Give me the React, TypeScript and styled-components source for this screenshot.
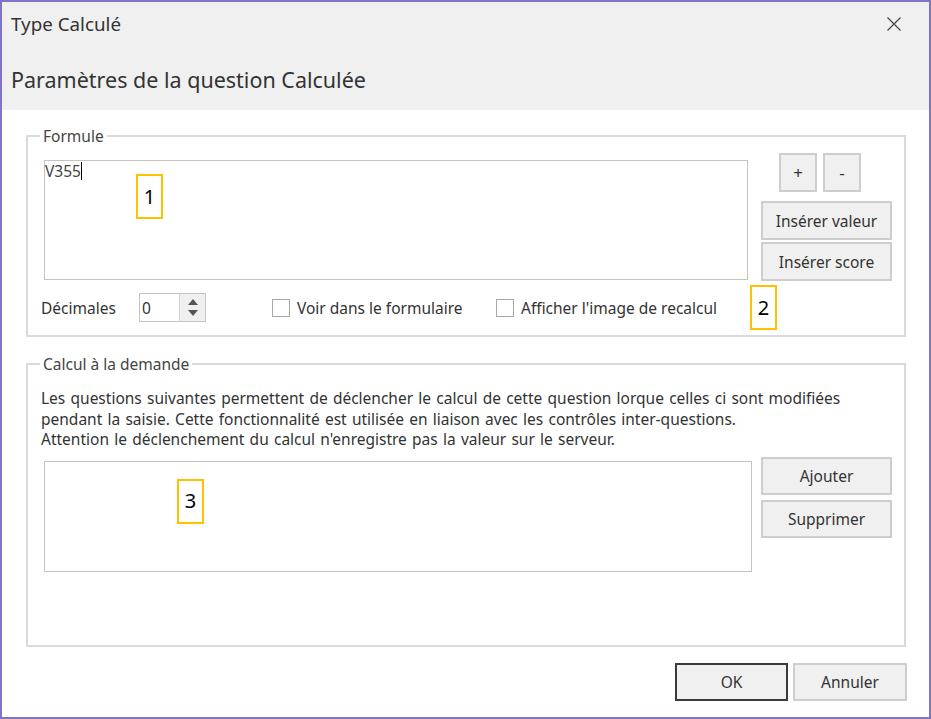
import React from "react";
import styled, { createGlobalStyle } from "styled-components";

const Global = createGlobalStyle`
  html, body { margin: 0; padding: 0; background: #fff; }
  body { font-family: "Noto Sans", "Open Sans", sans-serif; }
  * { box-sizing: border-box; }
`;

const FS = 15.5;

const Window = styled.div`
  width: 931px;
  height: 719px;
  border: 2px solid #8174c4;
  background: #fff;
  display: flex;
  flex-direction: column;
  font-family: "Noto Sans", sans-serif;
  color: #333;
  font-size: ${FS}px;
`;

const Header = styled.div`
  height: 108px;
  background: #f0f0f0;
  display: flex;
  flex-direction: column;
  padding: 0 0 0 9px;
`;

const TitleRow = styled.div`
  height: 44px;
  display: flex;
  align-items: center;
  justify-content: space-between;
`;

const Title = styled.div`
  font-size: 18.8px;
  color: #333;
`;

const CloseBtn = styled.div`
  width: 70px;
  height: 44px;
  display: flex;
  align-items: center;
  justify-content: center;
  color: #444;
`;

const Heading = styled.div`
  margin-top: 20px;
  font-size: 21.5px;
  line-height: 28px;
  color: #333;
`;

const Body = styled.div`
  flex: 1;
  display: flex;
  flex-direction: column;
  padding: 0 23px 0 24px;
`;

const Group = styled.fieldset<{ $mt: number; $pb: number }>`
  margin: ${(p) => p.$mt}px 0 0 0;
  border: 2px solid #dadada;
  padding: 7px 12px ${(p) => p.$pb}px 13px;
  min-width: 0;
`;

const Legend = styled.legend`
  margin-left: -1px;
  padding: 0 3px;
  font-size: ${FS}px;
  line-height: 20px;
  color: #444;
`;

const TopRow = styled.div`
  display: flex;
  justify-content: space-between;
  align-items: flex-start;
`;

const EditBox = styled.div<{ $w: number; $h: number; $mt: number }>`
  position: relative;
  width: ${(p) => p.$w}px;
  height: ${(p) => p.$h}px;
  margin: ${(p) => p.$mt}px 0 0 3px;
  border: 1.5px solid #c4c4c4;
  background: #fff;
  padding: 0;
  font-size: ${FS}px;
  line-height: 20px;
  color: #444;
`;

const Caret = styled.span`
  display: inline-block;
  width: 1px;
  height: 18px;
  background: #000;
  vertical-align: -3px;
`;

const Badge = styled.div`
  width: 27px;
  height: 45px;
  border: 2.5px solid #ffc000;
  background: #fff;
  display: flex;
  align-items: center;
  justify-content: center;
  font-family: "Noto Sans", sans-serif;
  font-size: 20px;
  color: #000;
  flex: none;
`;

const FloatBadge = styled(Badge)<{ $l: number; $t: number }>`
  position: absolute;
  left: ${(p) => p.$l}px;
  top: ${(p) => p.$t}px;
`;

const ButtonCol = styled.div`
  width: 131px;
  display: flex;
  flex-direction: column;
  gap: 2px;
`;

const SmallRow = styled.div`
  display: flex;
  gap: 6px;
  padding-left: 18px;
  margin-bottom: 7px;
`;

const Button = styled.div<{ $w?: number; $h?: number; $default?: boolean; $big?: boolean }>`
  width: ${(p) => (p.$w ? `${p.$w}px` : "100%")};
  height: ${(p) => p.$h ?? 39}px;
  background: #f0f0f0;
  border: ${(p) => (p.$default ? "2px solid #3a3a3a" : "2px solid #cdcdcd")};
  display: flex;
  align-items: center;
  justify-content: center;
  font-size: ${(p) => (p.$big ? 17 : FS)}px;
  color: #333;
  flex: none;
`;

const OptionsRow = styled.div`
  height: 29px;
  margin-top: 12px;
  display: flex;
  align-items: center;
`;

const Label = styled.div`
  width: 98px;
  color: #333;
`;

const Spinner = styled.div`
  width: 67px;
  height: 29px;
  border: 1.5px solid #c4c4c4;
  display: flex;
  background: #fff;
`;

const SpinValue = styled.div`
  flex: 1;
  padding-left: 2px;
  display: flex;
  align-items: center;
  color: #333;
  border-right: 1.5px solid #d4d4d4;
`;

const SpinArrows = styled.div`
  width: 25px;
  background: #f0f0f0;
  display: flex;
  flex-direction: column;
  align-items: center;
  justify-content: center;
  gap: 5px;
`;

const Check = styled.div<{ $w: number; $ml: number }>`
  width: ${(p) => p.$w}px;
  margin-left: ${(p) => p.$ml}px;
  display: flex;
  align-items: center;
  gap: 7px;
  color: #333;
  flex: none;
`;

const Box = styled.span`
  width: 18px;
  height: 18px;
  border: 1.5px solid #a8a8a8;
  background: #fff;
  flex: none;
`;

const Info = styled.div`
  margin-top: 7px;
  line-height: 20.5px;
  word-spacing: 1.2px;
  color: #333;
`;

const ListRow = styled.div`
  margin-top: 7px;
  display: flex;
  justify-content: space-between;
  align-items: flex-start;
`;

const ListCol = styled.div`
  width: 131px;
  display: flex;
  flex-direction: column;
  gap: 5px;
`;

const Footer = styled.div`
  margin-top: 16px;
  display: flex;
  justify-content: flex-end;
  gap: 5px;
  margin-right: -1px;
`;

const Tri = ({ up }: { up?: boolean }) => (
  <svg width="10" height="6" viewBox="0 0 10 6">
    <path d={up ? "M0 6 L5 0 L10 6 Z" : "M0 0 L5 6 L10 0 Z"} fill="#555" />
  </svg>
);

export default function App() {
  return (
    <>
      <Global />
      <Window>
        <Header>
          <TitleRow>
            <Title>Type Calculé</Title>
            <CloseBtn>
              <svg width="16" height="16" viewBox="0 0 16 16">
                <path d="M1.5 1.5 L14.5 14.5 M14.5 1.5 L1.5 14.5" stroke="#444" strokeWidth="1.2" />
              </svg>
            </CloseBtn>
          </TitleRow>
          <Heading>Paramètres de la question Calculée</Heading>
        </Header>
        <Body>
          <Group $mt={16} $pb={13}>
            <Legend>Formule</Legend>
            <TopRow>
              <EditBox $w={704} $h={120} $mt={7}>
                V355<Caret />
                <FloatBadge $l={91} $t={13}>1</FloatBadge>
              </EditBox>
              <ButtonCol>
                <SmallRow>
                  <Button $w={38} $big>+</Button>
                  <Button $w={38} $big>-</Button>
                </SmallRow>
                <Button>Insérer valeur</Button>
                <Button>Insérer score</Button>
              </ButtonCol>
            </TopRow>
            <OptionsRow>
              <Label>Décimales</Label>
              <Spinner>
                <SpinValue>0</SpinValue>
                <SpinArrows>
                  <Tri up />
                  <Tri />
                </SpinArrows>
              </Spinner>
              <Check $w={224} $ml={66}>
                <Box />
                Voir dans le formulaire
              </Check>
              <Check $w={254} $ml={0}>
                <Box />
                Afficher l'image de recalcul
              </Check>
              <Badge>2</Badge>
            </OptionsRow>
          </Group>
          <Group $mt={17} $pb={73}>
            <Legend>Calcul à la demande</Legend>
            <Info>
              Les questions suivantes permettent de déclencher le calcul de cette question lorque celles ci sont modifiées
              <br />
              pendant la saisie. Cette fonctionnalité est utilisée en liaison avec les contrôles inter-questions.
              <br />
              Attention le déclenchement du calcul n'enregistre pas la valeur sur le serveur.
            </Info>
            <ListRow>
              <EditBox $w={708} $h={111} $mt={4}>
                <FloatBadge $l={132} $t={17}>3</FloatBadge>
              </EditBox>
              <ListCol>
                <Button $h={38}>Ajouter</Button>
                <Button $h={38}>Supprimer</Button>
              </ListCol>
            </ListRow>
          </Group>
          <Footer>
            <Button $w={113} $h={38} $default>OK</Button>
            <Button $w={114} $h={38}>Annuler</Button>
          </Footer>
        </Body>
      </Window>
    </>
  );
}
